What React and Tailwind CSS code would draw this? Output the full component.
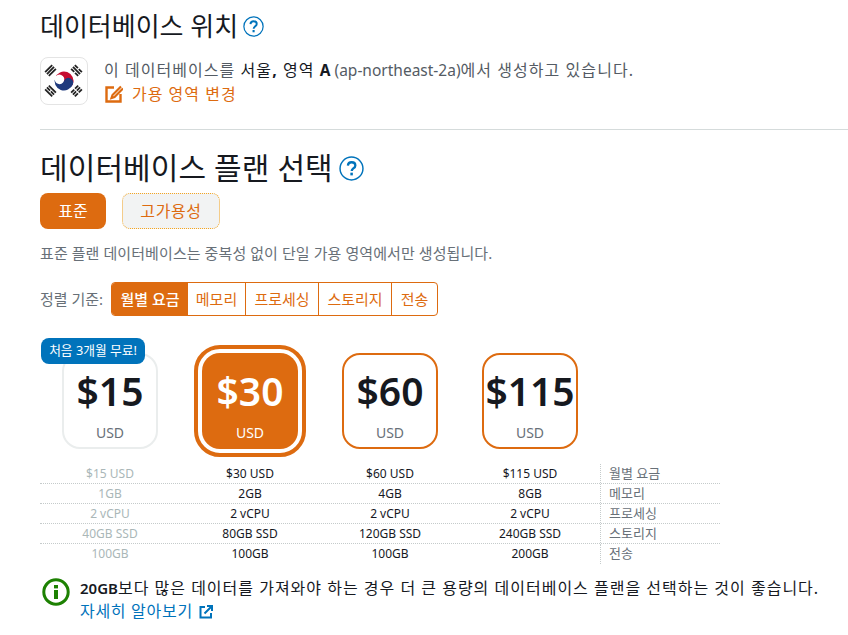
const font = { fontFamily: '"Noto Sans","Noto Sans CJK KR",sans-serif' };

function Help({ size }) {
  return (
    <svg width={size} height={size} viewBox="0 0 24 24" className="shrink-0">
      <circle cx="12" cy="12" r="11" fill="none" stroke="#0073bb" strokeWidth="1.4" />
      <path d="M8.5 9.2c.2-2.1 1.7-3.2 3.6-3.2 2.1 0 3.6 1.2 3.6 3 0 1.5-.9 2.2-1.9 2.9-.9.7-1.6 1.2-1.6 2.6" fill="none" stroke="#0073bb" strokeWidth="2.2" />
      <rect x="10.9" y="16" width="2.4" height="2.6" fill="#0073bb" />
    </svg>
  );
}

function Flag() {
  const tri = (x, y, r, cuts) => (
    <g transform={`translate(${x} ${y}) rotate(${r})`} fill="#222">
      {[-2.6, 0, 2.6].map((dy, i) => (
        cuts[i]
          ? <g key={i}><rect x="-5" y={dy - 0.9} width="4.4" height="1.8" /><rect x="0.6" y={dy - 0.9} width="4.4" height="1.8" /></g>
          : <rect key={i} x="-5" y={dy - 0.9} width="10" height="1.8" />
      ))}
    </g>
  );
  return (
    <div className="w-12 h-12 rounded-lg border border-[#e4e4e4] bg-white shrink-0 overflow-hidden">
      <svg width="46" height="46" viewBox="0 0 46 46">
        <path d="M13.5 23a9.5 9.5 0 0 1 19 0a4.75 4.75 0 0 1-9.5 0a4.75 4.75 0 0 0-9.5 0z" fill="#c60c30" transform="rotate(20 23 23)" />
        <path d="M13.5 23a9.5 9.5 0 0 0 19 0a4.75 4.75 0 0 0-9.5 0a4.75 4.75 0 0 1-9.5 0z" fill="#1f3a7d" transform="rotate(20 23 23)" />
        {tri(9.5, 12.5, -45, [0, 0, 0])}
        {tri(35.5, 12.5, 45, [1, 0, 1])}
        {tri(9.5, 33, 45, [0, 1, 0])}
        {tri(35.5, 33, -45, [1, 1, 1])}
      </svg>
    </div>
  );
}

const plans = [
  { price: '$15', state: 'dim' },
  { price: '$30', state: 'on' },
  { price: '$60', state: 'off' },
  { price: '$115', state: 'off' },
];

function Card({ price, state }) {
  if (state === 'on') {
    return (
      <div className="w-[112px] h-[112px] rounded-[26px] border-4 border-[#dd6b10] p-1 bg-white">
        <div className="h-full rounded-[18px] bg-[#dd6b10] flex flex-col items-center text-white">
          <div className="text-[39px] leading-[48px] font-semibold mt-[14px]">{price}</div>
          <div className="text-sm leading-5 mt-[8px]">USD</div>
        </div>
      </div>
    );
  }
  const border = state === 'dim' ? 'border-[#eaeded]' : 'border-[#dd6b10]';
  return (
    <div className={`w-24 h-24 rounded-[18px] border-2 ${border} bg-white flex flex-col items-center`}>
      <div className="text-[39px] leading-[48px] font-semibold text-[#16191f] mt-[12px] whitespace-nowrap">{price}</div>
      <div className="text-sm leading-5 mt-[8px] text-[#687078]">USD</div>
    </div>
  );
}

const rows = [
  ['$15 USD', '$30 USD', '$60 USD', '$115 USD', '월별 요금'],
  ['1GB', '2GB', '4GB', '8GB', '메모리'],
  ['2 vCPU', '2 vCPU', '2 vCPU', '2 vCPU', '프로세싱'],
  ['40GB SSD', '80GB SSD', '120GB SSD', '240GB SSD', '스토리지'],
  ['100GB', '100GB', '100GB', '200GB', '전송'],
];

export default function App() {
  return (
    <div style={font} className="w-[848px] h-[635px] overflow-hidden bg-white pl-10 text-[#16191f]">
      <div className="h-[40px] mt-[6px] flex items-center gap-[5px]">
        <h2 className="text-[26px] leading-[40px] font-normal whitespace-nowrap">데이터베이스 위치</h2>
        <Help size={21} />
      </div>
      <div className="flex mt-[11px] gap-4 h-12">
        <Flag />
        <div className="text-[15.5px] whitespace-nowrap">
          <div className="leading-6 text-[#545b64] mt-[1px]">
            <span className="text-base tracking-[1.05px]">이 데이터베이스를 </span>
            <span className="text-base tracking-[1.05px] text-[#16191f]">서울<b>,</b> 영역 </span>
            <b className="text-[#16191f]">A</b> (ap-northeast-2a)
            <span className="text-base tracking-[1.05px]">에서 생성하고 있습니다.</span>
          </div>
          <div className="flex items-center gap-[9px] leading-6 text-[#dd6b10] text-base tracking-[1px]">
            <svg width="18" height="18" viewBox="0 0 18 18" fill="none" stroke="#dd6b10" strokeWidth="2.4" className="ml-[1px]">
              <path d="M9 2.5H1.5v14h14V9" />
              <path d="M16 1.5L7.5 10l-1 3 3-1L18 3.5" strokeWidth="2.2" />
            </svg>
            <span>가용 영역 변경</span>
          </div>
        </div>
      </div>
      <div className="h-px bg-[#d5dbdb] mt-6" />
      <div className="h-[40px] mt-[18px] flex items-center gap-[6px]">
        <h2 className="text-[30px] leading-[40px] font-normal whitespace-nowrap tracking-[0.1px]">데이터베이스 플랜 선택</h2>
        <Help size={25} />
      </div>
      <div className="flex gap-4 mt-[5px]">
        <div className="w-[66px] h-9 rounded-lg bg-[#dd6b10] text-white text-base flex items-center justify-center">표준</div>
        <div className="w-[98px] h-9 rounded-lg bg-[#f2f3f3] border border-dotted border-[#f5a623] text-[#dd6b10] text-base tracking-[0.6px] flex items-center justify-center">고가용성</div>
      </div>
      <p className="text-[15px] leading-5 text-[#687078] mt-[14px] whitespace-nowrap tracking-[0.08px]">표준 플랜 데이터베이스는 중복성 없이 단일 가용 영역에서만 생성됩니다.</p>
      <div className="flex items-center mt-[19px] h-[34px]">
        <span className="w-[71px] text-[15px] text-[#687078] whitespace-nowrap">정렬 기준:</span>
        <div className="flex h-[34px] rounded-[4px] border border-[#dd6b10] text-[15px] text-[#dd6b10] overflow-hidden whitespace-nowrap">
          <div className="w-[76px] bg-[#dd6b10] text-white flex items-center justify-center font-medium">월별 요금</div>
          <div className="w-[58px] border-r border-[#dd6b10] flex items-center justify-center">메모리</div>
          <div className="w-[73px] border-r border-[#dd6b10] flex items-center justify-center">프로세싱</div>
          <div className="w-[73px] border-r border-[#dd6b10] flex items-center justify-center">스토리지</div>
          <div className="w-[45px] flex items-center justify-center">전송</div>
        </div>
      </div>
      <div className="relative flex mt-[29px] h-[119px] w-[560px]">
        {plans.map((p) => (
          <div key={p.price} className="w-[140px] flex justify-center items-center h-[112px]">
            <Card {...p} />
          </div>
        ))}
        <div className="absolute left-[1px] top-[-7px] w-[104px] h-[26px] rounded-lg bg-[#0073bb] text-white text-[12.75px] flex items-center justify-center whitespace-nowrap">처음 3개월 무료!</div>
      </div>
      <div className="w-[680px] text-xs">
        {rows.map((r, i) => (
          <div key={r[4]} className={`flex h-5 ${i < 4 ? 'border-b border-dotted border-[#c5cbcb]' : ''}`}>
            {r.slice(0, 4).map((c, j) => (
              <div key={j} className={`w-[140px] flex items-center justify-center ${j === 0 ? 'text-[#aab7b8]' : 'text-[#16191f]'}`}>{c}</div>
            ))}
            <div className="flex-1 border-l border-dotted border-[#c5cbcb] pl-2 flex items-center text-[13px] text-[#687078] whitespace-nowrap">{r[4]}</div>
          </div>
        ))}
      </div>
      <div className="flex mt-[13px] pl-[2px] gap-[10px]">
        <svg width="28" height="28" viewBox="0 0 28 28" className="mt-[1px] shrink-0">
          <circle cx="14" cy="14" r="12.2" fill="none" stroke="#1d8102" strokeWidth="3" />
          <rect x="12" y="12" width="4" height="9" fill="#1d8102" />
          <rect x="12" y="7" width="4" height="3.4" fill="#1d8102" />
        </svg>
        <div className="text-base whitespace-nowrap">
          <div className="leading-[23px] tracking-[1px]"><b className="font-semibold text-[15px] tracking-normal">20GB</b>보다 많은 데이터를 가져와야 하는 경우 더 큰 용량의 데이터베이스 플랜을 선택하는 것이 좋습니다.</div>
          <div className="leading-[23px] text-[#0073bb] flex items-center gap-[6px] tracking-[0.7px]">
            자세히 알아보기
            <svg width="14" height="14" viewBox="0 0 14 14" fill="none" stroke="#0073bb" strokeWidth="2">
              <path d="M6 2H1.5v10.5H12V8" />
              <path d="M5.5 8.5L12.5 1.5M8 1h5v5" />
            </svg>
          </div>
        </div>
      </div>
    </div>
  );
}
